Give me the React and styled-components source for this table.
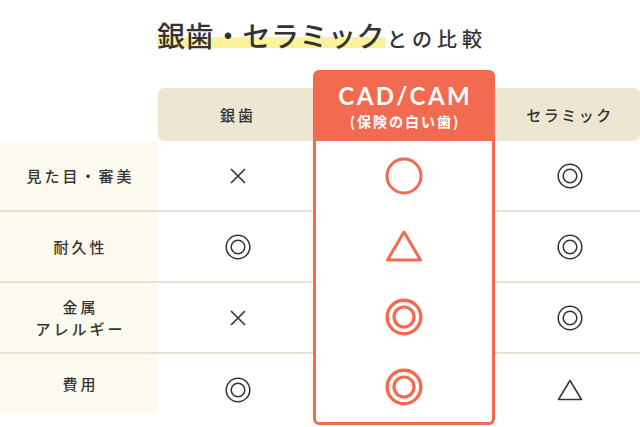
import React from 'react';
import styled, { createGlobalStyle } from 'styled-components';

const ORANGE = '#f26a4f';
const INK = '#333333';

const rows = [
  { label: ['見た目・審美'], silver: 'cross', cad: 'circle', ceramic: 'double' },
  { label: ['耐久性'], silver: 'double', cad: 'triangle', ceramic: 'double' },
  { label: ['金属', 'アレルギー'], silver: 'cross', cad: 'double', ceramic: 'double' },
  { label: ['費用'], silver: 'double', cad: 'double', ceramic: 'triangle' },
];

// ○ ◎ △ × drawn as svg
function Mark({ type, accent }) {
  const c = accent ? ORANGE : INK;
  if (type === 'cross') {
    return (
      <svg width="16" height="16" viewBox="0 0 16 16">
        <path d="M1 1L15 15M15 1L1 15" stroke={c} strokeWidth="1.6" fill="none" />
      </svg>
    );
  }
  if (type === 'circle') {
    return (
      <svg width="38" height="38" viewBox="0 0 38 38">
        <circle cx="19" cy="19" r="17" stroke={c} strokeWidth="3" fill="none" />
      </svg>
    );
  }
  if (type === 'double') {
    if (accent) {
      return (
        <svg width="38" height="38" viewBox="0 0 38 38">
          <circle cx="19" cy="19" r="16.8" stroke={c} strokeWidth="3.4" fill="none" />
          <circle cx="19" cy="19" r="10" stroke={c} strokeWidth="3.2" fill="none" />
        </svg>
      );
    }
    return (
      <svg width="26" height="26" viewBox="0 0 26 26">
        <circle cx="13" cy="13" r="11.8" stroke={c} strokeWidth="1.5" fill="none" />
        <circle cx="13" cy="13" r="6.8" stroke={c} strokeWidth="1.5" fill="none" />
      </svg>
    );
  }
  if (accent) {
    return (
      <svg width="40" height="34" viewBox="0 0 40 34">
        <path d="M3.5 31L20 3L36.5 31Z" stroke={c} strokeWidth="3" strokeLinejoin="round" fill="none" />
      </svg>
    );
  }
  return (
    <svg width="26" height="22" viewBox="0 0 26 22">
      <path d="M1.5 20.5L13 1.5L24.5 20.5Z" stroke={c} strokeWidth="1.5" strokeLinejoin="round" fill="none" />
    </svg>
  );
}

export default function App() {
  return (
    <>
      <Global />
      <Page>
        <Title>
          <Marked>銀歯・セラミック</Marked>
          <Small>との比較</Small>
        </Title>

        <Table>
          <HeadBar />
          <HeadText $col={2}>銀歯</HeadText>
          <HeadText $col={4}>セラミック</HeadText>

          <Pick>
            <PickHead>
              <PickName>CAD/CAM</PickName>
              <PickSub>(保険の白い歯)</PickSub>
            </PickHead>
            {rows.map((r, i) => (
              <PickCell key={i}>
                <Mark type={r.cad} accent />
              </PickCell>
            ))}
          </Pick>

          {rows.map((r, i) => (
            <React.Fragment key={i}>
              <Label $row={i + 2} $last={i === rows.length - 1}>
                {r.label.map((t) => (
                  <span key={t}>{t}</span>
                ))}
              </Label>
              <Cell $row={i + 2} $col={2} $last={i === rows.length - 1}>
                <Mark type={r.silver} />
              </Cell>
              <Cell $row={i + 2} $col={4} $last={i === rows.length - 1}>
                <Mark type={r.ceramic} />
              </Cell>
            </React.Fragment>
          ))}
        </Table>
      </Page>
    </>
  );
}

const Global = createGlobalStyle`
  html, body {
    margin: 0;
    padding: 0;
    background: #ffffff;
  }
  body {
    font-family: "Noto Sans CJK JP", "Noto Sans", sans-serif;
    color: ${INK};
  }
`;

const Page = styled.div`
  width: 640px;
  height: 427px;
  overflow: hidden;
`;

// 見出し
const Title = styled.h1`
  margin: 0;
  height: 70px;
  padding-top: 21px;
  box-sizing: border-box;
  display: flex;
  justify-content: center;
  align-items: baseline;
  font-weight: 500;
  padding-left: 4px;
`;

const Marked = styled.span`
  font-size: 28px;
  line-height: 1;
  letter-spacing: 0.5px;
  background: linear-gradient(transparent 58%, #fbf39c 58%, #fbf39c 96%, transparent 96%);
`;

const Small = styled.span`
  font-size: 20px;
  line-height: 1;
  letter-spacing: 5px;
  margin-left: 2px;
`;

// 表
const Table = styled.div`
  display: grid;
  grid-template-columns: 158px 155px 182px 145px;
  grid-template-rows: 71px 71px 71px 71px 71px;
`;

const HeadBar = styled.div`
  grid-row: 1;
  grid-column: 2 / span 3;
  align-self: end;
  height: 53px;
  background: #ede6d1;
  border-radius: 6px;
`;

const HeadText = styled.div`
  grid-row: 1;
  grid-column: ${(p) => p.$col};
  align-self: end;
  height: 53px;
  padding-left: 5px;
  display: flex;
  align-items: center;
  justify-content: center;
  font-size: 15px;
  font-weight: 500;
  letter-spacing: ${(p) => (p.$col === 2 ? '3px' : '2.5px')};
  position: relative;
`;

const Pick = styled.div`
  grid-row: 1 / span 5;
  grid-column: 3;
  display: flex;
  flex-direction: column;
  border: 3px solid ${ORANGE};
  border-radius: 6px;
  background: #ffffff;
  position: relative;
  z-index: 1;
`;

const PickHead = styled.div`
  height: 68px;
  background: ${ORANGE};
  color: #ffffff;
  display: flex;
  flex-direction: column;
  align-items: center;
  justify-content: center;
  gap: 5px;
  padding-bottom: 2px;
  box-sizing: border-box;
`;

const PickName = styled.div`
  font-family: "Lato", "Noto Sans", sans-serif;
  font-size: 24px;
  font-weight: 700;
  letter-spacing: 2.5px;
  line-height: 24px;
  margin-right: -2.5px;
`;

const PickSub = styled.div`
  font-size: 14px;
  font-weight: 700;
  letter-spacing: 2px;
  line-height: 16px;
  margin-right: -2px;
`;

const PickCell = styled.div`
  flex: 1;
  display: flex;
  align-items: center;
  justify-content: center;
`;

const Label = styled.div`
  grid-row: ${(p) => p.$row};
  grid-column: 1;
  align-self: start;
  height: ${(p) => (p.$last ? '59px' : '71px')};
  box-sizing: border-box;
  background: #fdfaf0;
  border-bottom: ${(p) => (p.$last ? 'none' : '2px solid #e7e2d4')};
  display: flex;
  flex-direction: column;
  align-items: center;
  justify-content: center;
  padding-left: 3px;
  font-size: 15px;
  font-weight: 500;
  letter-spacing: 3px;
  line-height: 22px;
`;

const Cell = styled.div`
  grid-row: ${(p) => p.$row};
  grid-column: ${(p) => p.$col};
  box-sizing: border-box;
  border-bottom: ${(p) => (p.$last ? 'none' : '2px solid #e7e2d4')};
  padding-left: 5px;
  display: flex;
  align-items: center;
  justify-content: center;
`;
